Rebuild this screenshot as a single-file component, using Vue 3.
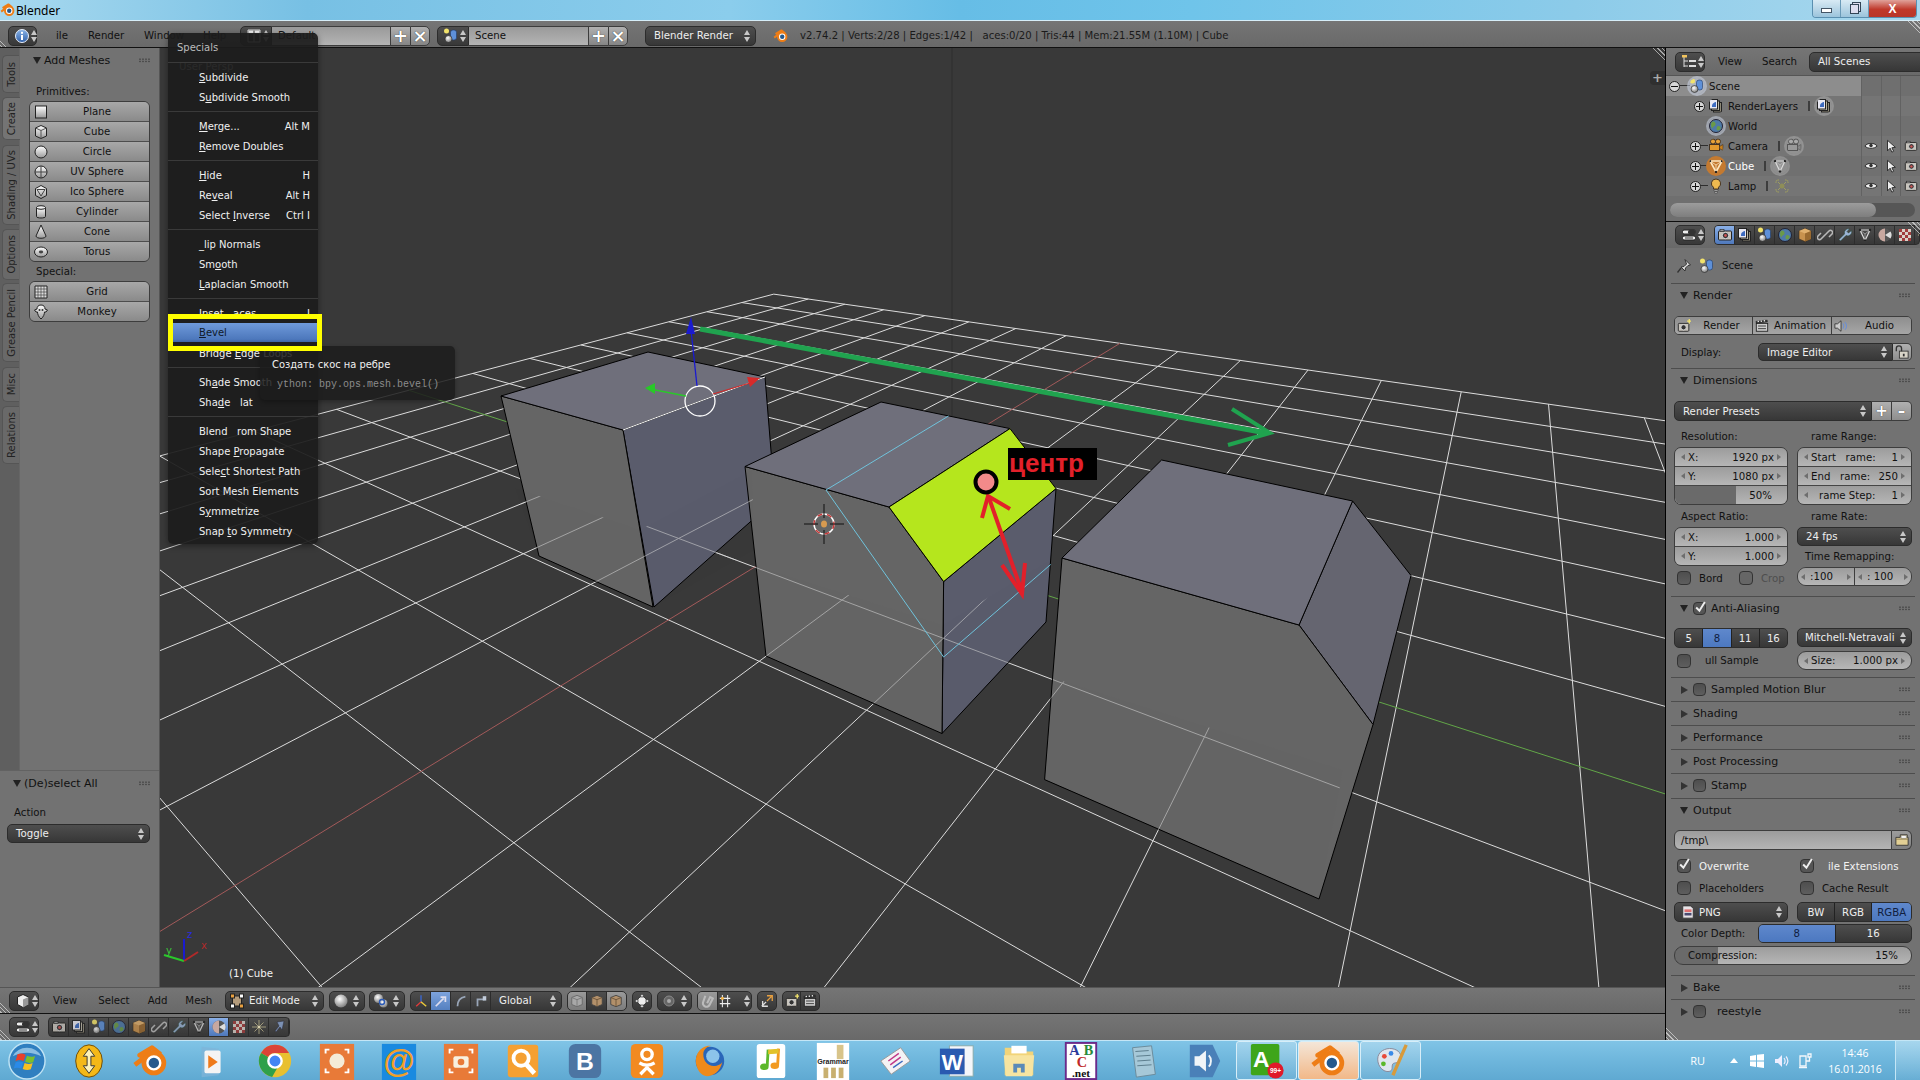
<script setup>
// 3D view grid comes from a homography picked off the reference
const O = [825, 524]
const VU = [1522, 97]
const VV = [-417, 125]
const A = 0.0917
const B = 0.063

function project(u, v) {
  const w = 1 + u * A + v * B
  return [
    (O[0] + u * A * VU[0] + v * B * VV[0]) / w,
    (O[1] + u * A * VU[1] + v * B * VV[1]) / w
  ]
}

function gridLine(u0, v0, u1, v1) {
  // keep the end that would cross behind the camera off the picture
  const minW = 0.14
  const w0 = 1 + u0 * A + v0 * B
  const w1 = 1 + u1 * A + v1 * B
  let a = [u0, v0]
  if (w0 < minW) {
    const t = (minW - w0) / (w1 - w0)
    a = [u0 + (u1 - u0) * t, v0 + (v1 - v0) * t]
  }
  const p = project(a[0], a[1])
  const q = project(u1, v1)
  return { x1: p[0], y1: p[1], x2: q[0], y2: q[1] }
}

const gridLines = []
for (let i = -8; i <= 8; i++) {
  if (i !== 0) {
    gridLines.push(gridLine(-8, i, 8, i))
    gridLines.push(gridLine(i, -8, i, 8))
  }
}
const redAxis = gridLine(-8, 0, 8, 0)
const greenAxis = gridLine(0, -8, 0, 8)

const poly = pts => pts.map(p => p.join(',')).join(' ')

const faces = [
  { fill: '#5a5c6c', pts: [[623, 430], [765, 377], [775, 500], [654, 607]] },
  { fill: '#656565', pts: [[501, 396], [623, 430], [653, 607], [539, 556]] },
  { fill: '#6f6f7b', pts: [[501, 396], [648, 352], [765, 377], [623, 430]] },
  { fill: '#5a5c6c', pts: [[943.6, 581.6], [1056, 488.6], [1046, 622], [942, 733.5]] },
  { fill: '#656565', pts: [[745, 466.5], [889, 507], [943.6, 581.6], [942, 733.5], [766, 656]] },
  { fill: '#6f6f7b', pts: [[745, 466.5], [881, 402], [1010, 428.6], [889, 507]] },
  { fill: '#b5e61d', pts: [[1010, 428.6], [1056, 488.6], [943.6, 581.6], [889, 507]] },
  { fill: '#656570', pts: [[1352.6, 501], [1411, 575.5], [1373, 724.5], [1299, 625]] },
  { fill: '#656565', pts: [[1062, 558], [1299, 625], [1373, 724.5], [1319, 899], [1044.6, 779.6]] },
  { fill: '#6f6f7b', pts: [[1062, 558], [1161.6, 460], [1352.6, 501], [1299, 625]] }
]

// parts of the cubes that lie under the floor, so the grid stays visible there
const underFloor = [
  [[515, 488], [640, 530], [752, 470], [754, 550], [653, 607], [539, 556]],
  [[753, 565], [943, 625], [1050, 560], [1046, 622], [942, 733], [766, 656]],
  [[1053, 678], [1343, 770], [1319, 899], [1044, 780]]
]

const tabs = [
  { name: 'Tools', cls: 'tab-tools' },
  { name: 'Create', cls: 'tab-create', active: true },
  { name: 'Shading / UVs', cls: 'tab-shading' },
  { name: 'Options', cls: 'tab-options' },
  { name: 'Grease Pencil', cls: 'tab-grease' },
  { name: 'Misc', cls: 'tab-misc' },
  { name: 'Relations', cls: 'tab-relations' }
]

const primitives = [
  ['Plane', 'plane'], ['Cube', 'cube'], ['Circle', 'circle'], ['UV Sphere', 'uvsphere'],
  ['Ico Sphere', 'ico'], ['Cylinder', 'cyl'], ['Cone', 'cone'], ['Torus', 'torus']
]
const special = [['Grid', 'grid'], ['Monkey', 'monkey']]

const menuGroups = [
  [['&Subdivide'], ['S&ubdivide Smooth']],
  [['&Merge...', 'Alt M'], ['&Remove Doubles']],
  [['&Hide', 'H'], ['Re&veal', 'Alt H'], ['Select &Inverse', 'Ctrl I']],
  [['_lip Normals'], ['Sm&ooth'], ['&Laplacian Smooth']],
  [['&Inset   aces', 'I'], ['&Bevel'], ['Bridge &Edge Loops']],
  [['Sh&ade Smooth'], ['Sha&de   lat']],
  [['Blend   rom Shape'], ['Shape &Propagate'], ['Sele&ct Shortest Path'], ['Sort Mesh Elements'], ['S&ymmetrize'], ['Snap &to Symmetry']]
]

function split(label) {
  const i = label.indexOf('&')
  if (i < 0) return [label, '', '']
  return [label.slice(0, i), label[i + 1], label.slice(i + 2)]
}

const outliner = [
  { name: 'Scene', icon: 'scene', exp: 'minus', cls: 'lvl0', hi: true },
  { name: 'RenderLayers', icon: 'layers', exp: 'plus', cls: 'lvl1', extra: 'layers' },
  { name: 'World', icon: 'world', cls: 'lvl2', ring: true },
  { name: 'Camera', icon: 'camera', exp: 'plus', cls: 'lvl3', extra: 'camgrey', vis: true },
  { name: 'Cube', icon: 'meshtri', exp: 'plus', cls: 'lvl3', extra: 'meshgrey', vis: true, sel: true },
  { name: 'Lamp', icon: 'lamp', exp: 'plus', cls: 'lvl3', extra: 'lampdata', plain: true, vis: true }
]

const propTabs = ['rcam', 'layers', 'scene', 'world', 'box', 'chain', 'wrench', 'meshgrey', 'matball', 'checker', 'stars']
const lowerTabs = ['rcam', 'layers', 'scene', 'world', 'box', 'chain', 'wrench', 'meshgrey', 'matball', 'checker', 'stars', 'physics']

const collapsedA = [
  { name: 'Sampled Motion Blur', chk: true },
  { name: 'Shading' },
  { name: 'Performance' },
  { name: 'Post Processing' },
  { name: 'Stamp', chk: true }
]

const sans = 'Liberation Sans, sans-serif'
const serif = 'Liberation Serif, serif'
const taskIcons = [
  { id: 't-arrows' }, { id: 't-blender' }, { id: 't-media' }, { id: 't-chrome' }, { id: 't-orange' },
  { id: 't-mail', labels: [{ t: '@', x: 20, y: 32, size: 34, fill: '#f2a02a', font: sans }] },
  { id: 't-cam' }, { id: 't-search' },
  { id: 't-vk', labels: [{ t: 'B', x: 20, y: 29, size: 26, fill: '#fff', font: sans }] },
  { id: 't-ok' }, { id: 't-fox' }, { id: 't-music' },
  { id: 't-gram', labels: [{ t: 'Grammar', x: 20, y: 23, size: 7.5, fill: '#222', font: sans }] },
  { id: 't-book' },
  { id: 't-word', labels: [{ t: 'W', x: 15, y: 29, size: 24, fill: '#fff', font: sans }] },
  { id: 't-folder' },
  { id: 't-abc', labels: [
    { t: 'A', x: 13, y: 14, size: 15, fill: '#2a3a9a', font: serif },
    { t: 'B', x: 28, y: 14, size: 15, fill: '#2a8a3a', font: serif },
    { t: 'C', x: 21, y: 26, size: 15, fill: '#c02a2a', font: serif },
    { t: '.net', x: 20, y: 37, size: 12, fill: '#111', font: serif }
  ] },
  { id: 't-note' }, { id: 't-speak' },
  { id: 't-a99', open: true, labels: [
    { t: 'A', x: 14, y: 26, size: 24, fill: '#fff', font: sans },
    { t: '99+', x: 29, y: 33, size: 7, fill: '#fff', font: sans }
  ] },
  { id: 't-blender', open: true, hot: true },
  { id: 't-paint', open: true }
]
</script>

<template>
  <div class="app">
    <svg class="defs" width="0" height="0">
      <defs>
        <linearGradient id="gw" x1="0" y1="0" x2="0" y2="1"><stop offset="0" stop-color="#fff"/><stop offset="1" stop-color="#9a9a9a"/></linearGradient>
        <linearGradient id="gb" x1="0" y1="0" x2="0" y2="1"><stop offset="0" stop-color="#8ab4e8"/><stop offset="1" stop-color="#2f5fa8"/></linearGradient>
        <radialGradient id="gs" cx=".4" cy=".35" r=".7"><stop offset="0" stop-color="#fff"/><stop offset="1" stop-color="#777"/></radialGradient>
      </defs>
      <symbol id="i-plane" viewBox="0 0 16 16"><rect x="2.5" y="2" width="11" height="12" fill="url(#gw)" stroke="#222"/></symbol>
      <symbol id="i-cube" viewBox="0 0 16 16"><path d="M8 1.5l5.5 2.5v8L8 14.5 2.5 12V4z" fill="url(#gw)" stroke="#222"/><path d="M2.5 4L8 6.5l5.5-2.5M8 6.5v8" fill="none" stroke="#555"/></symbol>
      <symbol id="i-circle" viewBox="0 0 16 16"><circle cx="8" cy="8" r="6" fill="url(#gw)" stroke="#222"/></symbol>
      <symbol id="i-uvsphere" viewBox="0 0 16 16"><circle cx="8" cy="8" r="6" fill="url(#gw)" stroke="#222"/><path d="M2 8h12M8 2v12" fill="none" stroke="#444"/></symbol>
      <symbol id="i-ico" viewBox="0 0 16 16"><path d="M8 1.5l5.5 3v7L8 14.5l-5.5-3v-7z" fill="url(#gw)" stroke="#222"/><path d="M4 5.5h8L8 12z" fill="none" stroke="#444"/></symbol>
      <symbol id="i-cyl" viewBox="0 0 16 16"><path d="M3.5 3.5v9c0 2 9 2 9 0v-9z" fill="url(#gw)" stroke="#222"/><ellipse cx="8" cy="3.5" rx="4.5" ry="1.8" fill="#eee" stroke="#222"/></symbol>
      <symbol id="i-cone" viewBox="0 0 16 16"><path d="M8 1L3 12c0 3 10 3 10 0z" fill="url(#gw)" stroke="#222"/></symbol>
      <symbol id="i-torus" viewBox="0 0 16 16"><ellipse cx="8" cy="8" rx="6.5" ry="5" fill="url(#gw)" stroke="#222"/><ellipse cx="8" cy="8" rx="2.2" ry="1.4" fill="#444"/></symbol>
      <symbol id="i-grid" viewBox="0 0 16 16"><path d="M2 2h12v12H2z" fill="#ddd" stroke="#222"/><path d="M5 2v12M8 2v12M11 2v12M2 5h12M2 8h12M2 11h12" stroke="#444" stroke-width=".7"/></symbol>
      <symbol id="i-monkey" viewBox="0 0 16 16"><path d="M8 1c3 0 4 2 4 4l2.500 1-1.500 2h-1.500c0 2-1 5-3.500 7-2.500-2-3.500-5-3.500-7H3L1.500 6 4 5c0-2 1-4 4-4z" fill="url(#gw)" stroke="#222"/><circle cx="6.500" cy="6" r="1" fill="#333"/><circle cx="9.500" cy="6" r="1" fill="#333"/></symbol>
      <symbol id="i-info" viewBox="0 0 16 16"><circle cx="8" cy="8" r="6.500" fill="url(#gb)" stroke="#e8eef8"/><rect x="7" y="7" width="2" height="5" fill="#fff"/><rect x="7" y="3.800" width="2" height="2" fill="#fff"/></symbol>
      <symbol id="i-layout" viewBox="0 0 16 16"><path d="M2 2h12v12H2z" fill="#333" stroke="#ddd"/><path d="M2.500 2.500h5v3h-5zM8.500 2.500h5v3h-5z" fill="#eee"/><path d="M8 6v8" stroke="#ddd"/></symbol>
      <symbol id="i-scene" viewBox="0 0 16 16"><circle cx="3.500" cy="3" r="2.500" fill="#f2e36b"/><rect x="7.500" y="2" width="6" height="10" rx="2.500" fill="#5e90d8" stroke="#1e3a68" stroke-width=".6"/><circle cx="5.500" cy="11" r="3.500" fill="url(#gs)" stroke="#222" stroke-width=".6"/></symbol>
      <symbol id="i-layers" viewBox="0 0 16 16"><rect x="5.500" y="4.500" width="8" height="9.500" fill="#8f8a78" stroke="#222"/><rect x="3.500" y="3" width="8" height="9.500" fill="#b9b5a4" stroke="#222"/><rect x="1.500" y="1.500" width="8" height="9.500" fill="#e8e8f2" stroke="#222"/><path d="M4 8c0-3 3-4 4-4v5H4z" fill="#3d6bc0"/></symbol>
      <symbol id="i-world" viewBox="0 0 16 16"><circle cx="8" cy="8" r="6.500" fill="#4e7aa8" stroke="#223"/><path d="M5 3.500c2 0 3 2 2.500 3.500S5 8 4.500 10 3 8 3 6.500 4 3.500 5 3.500zM10 8c2 0 3 1 2.500 2.500S10 13 9 12s0-4 1-4z" fill="#6a9a48"/></symbol>
      <symbol id="i-camera" viewBox="0 0 16 16"><circle cx="5" cy="3.500" r="2.500" fill="#e8a238" stroke="#432"/><circle cx="10" cy="3.500" r="2.500" fill="#e8a238" stroke="#432"/><rect x="1.500" y="6.500" width="10" height="6" fill="#e39a2e" stroke="#432"/><path d="M11.500 8.500l3.500-2v6l-3.500-2z" fill="#c77f1d" stroke="#432" stroke-width=".6"/></symbol>
      <symbol id="i-camgrey" viewBox="0 0 16 16"><circle cx="5" cy="3.500" r="2.500" fill="#aaa" stroke="#555"/><circle cx="10" cy="3.500" r="2.500" fill="#aaa" stroke="#555"/><rect x="1.500" y="6.500" width="10" height="6" fill="#999" stroke="#555"/><path d="M11.500 8.500l3.500-2v6l-3.500-2z" fill="#888" stroke="#555" stroke-width=".6"/></symbol>
      <symbol id="i-meshtri" viewBox="0 0 16 16"><path d="M2 3h12L8 14z" fill="none" stroke="#fbe6c0" stroke-width="1.600"/><path d="M2 3L8 7l6-4M8 7v7" fill="none" stroke="#fbe6c0" stroke-width=".8"/><circle cx="2" cy="3" r="1.200" fill="#222"/><circle cx="14" cy="3" r="1.200" fill="#222"/><circle cx="8" cy="14" r="1.200" fill="#222"/></symbol>
      <symbol id="i-meshgrey" viewBox="0 0 16 16"><path d="M3 3h10L8 13.500z" fill="none" stroke="#d8d8d8" stroke-width="1.200"/><path d="M3 3l5 4 5-4M8 7v6.500" fill="none" stroke="#ccc" stroke-width=".6"/><circle cx="3" cy="3" r="1.200" fill="#222"/><circle cx="13" cy="3" r="1.200" fill="#222"/><circle cx="8" cy="13.500" r="1.200" fill="#222"/></symbol>
      <symbol id="i-lamp" viewBox="0 0 16 16"><path d="M8 1a4.500 4.500 0 0 0-2.500 8.300V11h5V9.300A4.500 4.500 0 0 0 8 1z" fill="#eeb94f" stroke="#432"/><path d="M6 12h4v1H6zM6.500 14h3v1h-3z" fill="#eee" stroke="#333" stroke-width=".5"/></symbol>
      <symbol id="i-lampdata" viewBox="0 0 16 16"><circle cx="8" cy="8" r="2.500" fill="#8e8e58"/><path d="M2 2h3M2 2v3M14 2h-3M14 2v3M2 14h3M2 14v-3M14 14h-3M14 14v-3M4 4l2 2M12 4l-2 2M4 12l2-2M12 12l-2-2" stroke="#9e9e60" fill="none"/></symbol>
      <symbol id="i-eye" viewBox="0 0 16 16"><path d="M1 8c3-4 11-4 14 0-3 3.500-11 3.500-14 0z" fill="#f2f2f2" stroke="#222"/><circle cx="8" cy="7.500" r="2" fill="#333"/></symbol>
      <symbol id="i-cursor" viewBox="0 0 16 16"><path d="M4 1.500v12l3-3 2 4.500 2-1-2-4 4-.5z" fill="#eee" stroke="#222"/></symbol>
      <symbol id="i-rcam" viewBox="0 0 16 16"><rect x="1.500" y="4" width="13" height="9" rx="1" fill="#c8c4bc" stroke="#222"/><rect x="3" y="2.500" width="4" height="2" fill="#999" stroke="#222" stroke-width=".6"/><circle cx="8.500" cy="8.500" r="3.200" fill="#333" stroke="#ddd"/><circle cx="8.500" cy="8.500" r="1.400" fill="#c55"/></symbol>
      <symbol id="i-box" viewBox="0 0 16 16"><path d="M8 1.500l6 2.500v8L8 14.500 2 12V4z" fill="#c8924e" stroke="#3a2a16" stroke-width=".6"/><path d="M2 4l6 2.500L14 4 8 1.500z" fill="#e0b06e"/><path d="M8 6.500v8L14 12V4z" fill="#9a6a30"/></symbol>
      <symbol id="i-chain" viewBox="0 0 16 16"><path d="M7 9l-3 3a2 2 0 0 1-3-3l3-3M9 7l3-3a2 2 0 0 1 3 3l-3 3M5.500 10.500l5-5" fill="none" stroke="#b8b8b8" stroke-width="1.600"/></symbol>
      <symbol id="i-wrench" viewBox="0 0 16 16"><path d="M14.500 3.500l-3 2.500-1.500-1.500L12.500 2a4 4 0 0 0-5 5L2 12.500 3.500 14 9 8.500a4 4 0 0 0 5.500-5z" fill="#9ab2d4" stroke="#243" stroke-width=".5"/></symbol>
      <symbol id="i-matball" viewBox="0 0 16 16"><circle cx="8" cy="8" r="6.500" fill="#555"/><path d="M8 1.500a6.500 6.500 0 0 0 0 13z" fill="#c8a8a0"/><path d="M8 8l5.500-3.500a6.500 6.500 0 0 1 0 7z" fill="#ddd"/></symbol>
      <symbol id="i-checker" viewBox="0 0 16 16"><rect x="2" y="2" width="12" height="12" fill="#d8d0c8"/><path d="M2 2h3v3H2zM8 2h3v3H8zM5 5h3v3H5zM11 5h3v3h-3zM2 8h3v3H2zM8 8h3v3H8zM5 11h3v3H5zM11 11h3v3h-3z" fill="#a03c3c"/></symbol>
      <symbol id="i-stars" viewBox="0 0 16 16"><path d="M8 1v14M1 8h14M3.500 3.500l9 9M12.500 3.500l-9 9" stroke="#e8dca8" stroke-width=".7"/><circle cx="8" cy="8" r="1.300" fill="#fff6c8"/></symbol>
      <symbol id="i-physics" viewBox="0 0 16 16"><path d="M6 3l7-1-2 9-2-3-4 5-1-1 4-5z" fill="#8aa4d0" stroke="#223" stroke-width=".5"/></symbol>
      <symbol id="i-props" viewBox="0 0 16 16"><rect x="1.500" y="3" width="13" height="4" rx="1.500" fill="#eee" stroke="#222"/><rect x="1.500" y="9" width="13" height="4" rx="1.500" fill="#eee" stroke="#222"/><rect x="7" y="3" width="7.500" height="4" rx="1.500" fill="#333"/><path d="M4 11h8" stroke="#333"/></symbol>
      <symbol id="i-outl" viewBox="0 0 16 16"><path d="M3 2v11M3 7h4M3 12h4" stroke="#ddd" fill="none"/><rect x="1" y="1" width="5" height="2.500" fill="#f2c45c"/><path d="M8 6h7v2H8zM8 11h7v2H8z" fill="#ddd"/></symbol>
      <symbol id="i-pin" viewBox="0 0 16 16"><path d="M9 1.500l5.500 5.500-2.500.5-2.500 2.500-.5 3-4-4 3-.5L10.500 6z" fill="#ddd" stroke="#333"/><path d="M5 10l-3.500 4.500" stroke="#333" stroke-width="1.300"/></symbol>
      <symbol id="i-anim" viewBox="0 0 16 16"><rect x="1.500" y="5" width="13" height="9" fill="#ccc" stroke="#222"/><path d="M1 2.500l13-1.500.3 2.500-13 1.500z" fill="#333" stroke="#111" stroke-width=".3"/><path d="M3 3l1.500-.2M6.500 2.600l1.500-.2M10 2.200l1.500-.2" stroke="#eee" stroke-width="1.500"/><path d="M3.500 8h9M3.500 11h9" stroke="#333"/></symbol>
      <symbol id="i-audio" viewBox="0 0 16 16"><path d="M1 5.500h3L8 2v12l-4-3.500H1z" fill="#ccc" stroke="#333"/><path d="M10 5c1.500 1.500 1.500 4.500 0 6M12.500 3.500c2.500 2.500 2.500 6.500 0 9" fill="none" stroke="#6e8fd0" stroke-width="1.200"/></symbol>
      <symbol id="i-lock" viewBox="0 0 16 16"><rect x="5" y="7" width="10" height="8" fill="#d8d4c8" stroke="#333"/><path d="M1.500 7V4a3 3 0 0 1 6 0v3" fill="none" stroke="#333" stroke-width="1.500"/><rect x="9" y="10" width="2" height="3" fill="#333"/></symbol>
      <symbol id="i-folder" viewBox="0 0 16 16"><path d="M1 5h5V2h8v3h1v9H1z" fill="#e2cf94" stroke="#333"/><path d="M7 3h6v3H7z" fill="#fff" stroke="#555" stroke-width=".5"/><path d="M1 7h14" stroke="#8a7a50"/></symbol>
      <symbol id="i-png" viewBox="0 0 16 16"><path d="M2 1h9l3 3v11H2z" fill="#e8e4e8" stroke="#333"/><rect x="4" y="5" width="8" height="3" fill="#e07070"/><rect x="4" y="9" width="8" height="3" fill="#4a4a70"/></symbol>
      <symbol id="i-solid" viewBox="0 0 16 16"><path d="M8 1.500l5.500 2.500v7.500L8 14.500l-5.500-3V4z" fill="#eee" stroke="#222"/><path d="M8 6.500v8l5.500-3V4z" fill="#999"/></symbol>
      <symbol id="i-edit" viewBox="0 0 16 16"><path d="M3.500 3h9v10h-9z" fill="#b49c7c" stroke="#222"/><rect x="1.500" y="1" width="4" height="4" fill="#e8a040" stroke="#222"/><rect x="10.500" y="1" width="4" height="4" fill="#fff" stroke="#222"/><rect x="1.500" y="11" width="4" height="4" fill="#fff" stroke="#222"/><rect x="10.500" y="11" width="4" height="4" fill="#e8a040" stroke="#222"/></symbol>
      <symbol id="i-sphere" viewBox="0 0 16 16"><circle cx="8" cy="8" r="6.500" fill="url(#gs)"/></symbol>
      <symbol id="i-pivot" viewBox="0 0 16 16"><circle cx="5.500" cy="5.500" r="4.500" fill="url(#gs)"/><circle cx="10.500" cy="10.500" r="4" fill="url(#gs)"/><circle cx="9" cy="9" r="2.500" fill="none" stroke="#2a5ab8" stroke-width="1.400"/></symbol>
      <symbol id="i-axes" viewBox="0 0 16 16"><path d="M8 9V1.500" stroke="#3a6ad8" stroke-width="1.500"/><path d="M8 9l-5.500 5" stroke="#e83a3a" stroke-width="1.500"/><path d="M8 9l6 5" stroke="#e8c83a" stroke-width="1.500"/></symbol>
      <symbol id="i-tarrow" viewBox="0 0 16 16"><path d="M2 14l9-9M7.500 3.500H13V9" fill="none" stroke="#dde" stroke-width="2"/></symbol>
      <symbol id="i-rot" viewBox="0 0 16 16"><path d="M4 14C4 8 7 4 13 3" fill="none" stroke="#99a6b8" stroke-width="2"/></symbol>
      <symbol id="i-scale" viewBox="0 0 16 16"><path d="M4 14V6h8" fill="none" stroke="#99a6b8" stroke-width="2"/><rect x="10" y="2.500" width="4" height="5" fill="#c2ccda"/></symbol>
      <symbol id="i-v1" viewBox="0 0 16 16"><path d="M8 1.500l6 2.500v8L8 14.500 2 12V4z" fill="#a8a8a8" stroke="#666"/><path d="M2 4l6 2.500L14 4M8 6.500v8" fill="none" stroke="#777"/></symbol>
      <symbol id="i-v2" viewBox="0 0 16 16"><path d="M8 1.500l6 2.500v8L8 14.500 2 12V4z" fill="#b2906a" stroke="#444"/><path d="M2 4l6 2.500L14 4M8 6.500v8" fill="none" stroke="#6a5238"/></symbol>
      <symbol id="i-orbit" viewBox="0 0 16 16"><circle cx="8" cy="8" r="5" fill="#eee" stroke="#333"/><g fill="#eee" stroke="#222" stroke-width=".5"><circle cx="8" cy="2" r="1.500"/><circle cx="8" cy="14" r="1.500"/><circle cx="2" cy="8" r="1.500"/><circle cx="14" cy="8" r="1.500"/></g></symbol>
      <symbol id="i-prop" viewBox="0 0 16 16"><circle cx="8" cy="8" r="5" fill="#666" stroke="#8a8a8a"/><circle cx="8" cy="8" r="2" fill="#aaa"/></symbol>
      <symbol id="i-magnet" viewBox="0 0 16 16"><path d="M5 2L2.500 9a4 4 0 0 0 7.500 3l3.500-7-3-1.500-3.500 7" fill="none" stroke="#bbb" stroke-width="2.400"/></symbol>
      <symbol id="i-snap" viewBox="0 0 16 16"><path d="M2 5h12M2 11h12M5 1v14M11 1v14" stroke="#eee" stroke-width="1.200"/><rect x="3.500" y="3.500" width="3" height="3" fill="#f0b040"/></symbol>
      <symbol id="i-rimg" viewBox="0 0 16 16"><path d="M2 14l5-5M3 8v6h6" fill="none" stroke="#ddd" stroke-width="1.500"/><path d="M8 8l5-5M14 8V2H8" fill="none" stroke="#e8a040" stroke-width="1.500"/></symbol>
      <symbol id="i-rnew" viewBox="0 0 16 16"><rect x="1.500" y="5" width="12" height="9" rx="1" fill="#c8c4bc" stroke="#222"/><circle cx="7.500" cy="9.500" r="3" fill="#333" stroke="#ddd"/><path d="M14 0v5M11.500 2.500h5" stroke="#f2e36b" stroke-width="1.500"/></symbol>

      <!-- taskbar -->
      <symbol id="t-start" viewBox="0 0 40 40"><circle cx="20" cy="20" r="19" fill="#2f7fc0" stroke="#bfe3f4" stroke-width="1.500"/><path d="M5 15A17 17 0 0 1 35 15C25 10 15 10 5 15z" fill="#c8e8f8" opacity=".6"/><path d="M10 13c3-1.500 6-1 8.500.5l-2 6.500c-3-1-5.500-1.500-8.500 0z" fill="#e8402a"/><path d="M20 14.500c3 1.500 5.500 1.500 8.500.2l-2 6.500c-3 1.200-5.500 1-8.500-.4z" fill="#7cc02a"/><path d="M8 21.500c3-1.500 5.500-1 8 0l-2 6.500c-3-1-5.500-1.500-8 0z" fill="#2a8ae8"/><path d="M17.500 22c3 1.500 5.500 1.500 8.500.2l-2 6.500c-3 1.200-5.500 1-8.500-.4z" fill="#f8c020"/></symbol>
      <symbol id="t-arrows" viewBox="0 0 40 40"><ellipse cx="20" cy="20" rx="14" ry="17" fill="#f4b818" stroke="#6a4a08"/><path d="M20 7l6 8h-4v10h4l-6 8-6-8h4V15h-4z" fill="#fdf2b8" stroke="#333"/></symbol>
      <symbol id="t-blender" viewBox="0 0 40 40"><path d="M3 24l13-10H8l13-8 9 7" fill="none" stroke="#ee7d16" stroke-width="5" stroke-linejoin="round"/><circle cx="23" cy="22" r="10.500" fill="#fff" stroke="#ee7d16" stroke-width="5"/><circle cx="23" cy="22" r="5.500" fill="#25598d"/></symbol>
      <symbol id="t-media" viewBox="0 0 40 40"><path d="M8 5l18 2v28L8 37z" fill="#7fb4d8" opacity=".75"/><rect x="11" y="9" width="17" height="24" rx="2" fill="#f4f4f4"/><path d="M15 14l10 7-10 7z" fill="#ef7a1a"/></symbol>
      <symbol id="t-chrome" viewBox="0 0 40 40"><circle cx="20" cy="20" r="17" fill="#e8c030"/><path d="M20 3a17 17 0 0 1 14.700 8.500H20A8.500 8.500 0 0 0 12.700 15.700L5.300 11.500A17 17 0 0 1 20 3z" fill="#db4437"/><path d="M5.300 11.500A17 17 0 0 0 17 36.800l7-12.300A8.500 8.500 0 0 1 12.700 15.700z" fill="#2fa04a"/><circle cx="20" cy="20" r="7" fill="#4285f4" stroke="#fff" stroke-width="2.500"/></symbol>
      <symbol id="t-orange" viewBox="0 0 40 40"><rect x="2" y="2" width="36" height="38" fill="#e87a38"/><circle cx="20" cy="20" r="8" fill="#f4ecd8"/><path d="M8 12V8h4M32 12V8h-4M8 28v4h4M32 28v4h-4" fill="none" stroke="#fff" stroke-width="2"/></symbol>
      <symbol id="t-mail" viewBox="0 0 40 40"><rect x="2" y="2" width="36" height="38" fill="#1a8ae0"/></symbol>
      <symbol id="t-cam" viewBox="0 0 40 40"><rect x="2" y="2" width="36" height="38" fill="#e87a38"/><rect x="12" y="15" width="16" height="12" rx="2" fill="#f8f0e0"/><circle cx="20" cy="21" r="3.500" fill="#e87a38"/><path d="M8 12V8h4M32 12V8h-4M8 28v4h4M32 28v4h-4" fill="none" stroke="#fff" stroke-width="2"/></symbol>
      <symbol id="t-search" viewBox="0 0 40 40"><rect x="4" y="3" width="32" height="34" rx="3" fill="#f5a032"/><circle cx="18" cy="17" r="8" fill="none" stroke="#fff" stroke-width="4"/><path d="M23 23l9 10" stroke="#fff" stroke-width="5"/></symbol>
      <symbol id="t-vk" viewBox="0 0 40 40"><rect x="3" y="2" width="34" height="36" rx="7" fill="#4c75a3"/></symbol>
      <symbol id="t-ok" viewBox="0 0 40 40"><rect x="3" y="2" width="34" height="36" rx="5" fill="#f28a20"/><circle cx="20" cy="13" r="5.500" fill="none" stroke="#fff" stroke-width="3.500"/><path d="M12 22c5 3 11 3 16 0M20 25v3M13 34l7-7 7 7" fill="none" stroke="#fff" stroke-width="3.500"/></symbol>
      <symbol id="t-fox" viewBox="0 0 40 40"><circle cx="21" cy="20" r="15" fill="#2a66b8"/><circle cx="24" cy="15" r="7" fill="#8cc4ea"/><path d="M8 28c-6-14 4-25 14-24-4 1-8 4-8 9 0 8 6 14 14 12 3-1 5-2 6-4-2 10-10 15-16 15-4 0-8-3-10-8z" fill="#ef8a1a"/></symbol>
      <symbol id="t-music" viewBox="0 0 40 40"><rect x="5" y="2" width="30" height="36" rx="3" fill="#fff"/><path d="M17 8l-1 17" stroke="#5cb82a" stroke-width="3"/><ellipse cx="13" cy="26" rx="4.500" ry="3.500" fill="#5cb82a"/><path d="M28 7l-1 17" stroke="#f29a20" stroke-width="3"/><ellipse cx="24" cy="25" rx="4.500" ry="3.500" fill="#f29a20"/><path d="M17 8l11-1v5l-11 1z" fill="#e2c22a"/></symbol>
      <symbol id="t-gram" viewBox="0 0 40 40"><rect x="3" y="1" width="34" height="40" fill="#fff"/><rect x="24" y="3" width="7" height="15" fill="#d8c48a"/><rect x="10" y="27" width="5" height="11" fill="#c8b070"/><rect x="18" y="27" width="5" height="11" fill="#c8b070"/><rect x="26" y="27" width="5" height="11" fill="#c8b070"/></symbol>
      <symbol id="t-book" viewBox="0 0 40 40"><path d="M5 20L26 6l10 14-20 14z" fill="#f4f2f4" stroke="#999"/><path d="M13 20l11-8M15 24l11-8" stroke="#c03a8a" stroke-width="1.600"/><path d="M18 27l10-7" stroke="#3a6ac0" stroke-width="1.600"/></symbol>
      <symbol id="t-word" viewBox="0 0 40 40"><rect x="12" y="4" width="25" height="32" fill="#f4f6fa" stroke="#8aa"/><rect x="2" y="7" width="26" height="27" fill="#2a5ab0"/></symbol>
      <symbol id="t-folder" viewBox="0 0 40 40"><path d="M5 6h12l3 4h15v25H5z" fill="#f2d479"/><rect x="12" y="4" width="16" height="8" fill="#fff"/><path d="M4 14h32l-2 22H6z" fill="#f7e4a0"/><path d="M14 32V23h12v9h-4v-5h-4v5z" fill="#5a8ab8"/></symbol>
      <symbol id="t-abc" viewBox="0 0 40 40"><rect x="4" y="1" width="32" height="38" fill="#fff" stroke="#6a2a8a" stroke-width="2"/></symbol>
      <symbol id="t-note" viewBox="0 0 40 40"><path d="M9 6l20-2 4 30-20 3z" fill="#a6c8d8" stroke="#6a8a9a"/><path d="M12 10l14-1M13 15l15-1M14 20l14-1M14 25l15-1" stroke="#5a7a8a"/></symbol>
      <symbol id="t-speak" viewBox="0 0 40 40"><path d="M4 3h24l8 17-8 17H4z" fill="#4a80b8"/><path d="M9 15h5l7-6v22l-7-6H9z" fill="#f0f4f8"/><path d="M24 14c3 3 3 9 0 12" fill="none" stroke="#f0f4f8" stroke-width="2"/></symbol>
      <symbol id="t-a99" viewBox="0 0 40 40"><rect x="3" y="2" width="30" height="33" rx="2" fill="#3ea51a"/><circle cx="29" cy="30" r="8.500" fill="#e01a2a"/></symbol>
      <symbol id="t-paint" viewBox="0 0 40 40"><path d="M6 18c0-8 8-12 15-11 7 1 11 6 9 12-1 4-6 2-8 4-2 3 1 7-4 8-6 1-12-5-12-13z" fill="#dfe6ee" stroke="#889"/><circle cx="13" cy="15" r="2.500" fill="#e84a3a"/><circle cx="20" cy="12" r="2.500" fill="#3a8ae8"/><circle cx="12" cy="23" r="2.500" fill="#5ab82a"/><path d="M36 3L22 35" stroke="#d89a3a" stroke-width="3.500"/></symbol>
    </svg>

    <header class="titlebar">
      <svg class="title-logo"><use href="#t-blender" width="16" height="16"/></svg>
      <span class="title-text">Blender</span>
      <div class="winbtns">
        <span class="wb"><i class="wb-min"></i></span>
        <span class="wb"><i class="wb-max"></i></span>
        <span class="wb close">X</span>
      </div>
    </header>

    <div class="topbar">
      <div class="corner corner-tl"></div>
      <div class="pill pill-top"><svg class="ic"><use href="#i-info"/></svg><i class="updown"></i></div>
      <nav class="menubar">
        <span class="m-ile">ile</span><span class="m-render">Render</span><span class="m-win">Window</span><span class="m-help">Help</span>
      </nav>
      <div class="pill pill-top pill-layout"><svg class="ic"><use href="#i-layout"/></svg><i class="updown"></i></div>
      <div class="namefield nf-layout"><span class="nf-text">Default</span></div>
      <div class="nf-btn">+</div>
      <div class="nf-btn end">×</div>
      <div class="pill pill-top pill-scene"><svg class="ic"><use href="#i-scene"/></svg><i class="updown"></i></div>
      <div class="namefield nf-scene"><span class="nf-text">Scene</span></div>
      <div class="nf-btn">+</div>
      <div class="nf-btn end">×</div>
      <div class="dd dd-engine"><span>Blender Render</span><i class="updown"></i></div>
      <svg class="ic ic-logo"><use href="#t-blender" width="16" height="16"/></svg>
      <span class="stats">{{ 'v2.74.2 | Verts:2/28 | Edges:1/42 |   aces:0/20 | Tris:44 | Mem:21.55M (1.10M) | Cube' }}</span>
      <div class="corner corner-tr"></div>
    </div>

    <div class="workspace">
      <div class="left">
        <div class="main3d">
          <aside class="shelf">
            <div class="shelf-top">
              <div class="tabs">
                <div v-for="t in tabs" :key="t.name" class="tab" :class="[t.cls, { on: t.active }]"><span>{{ t.name }}</span></div>
              </div>
              <div class="shelf-panel">
                <div class="shelf-head"><i class="tri-down"></i><span>Add Meshes</span><i class="grip"></i></div>
                <div class="shelf-lbl lbl-prim">Primitives:</div>
                <div class="stack">
                  <div v-for="b in primitives" :key="b[0]" class="sbtn"><svg class="ic"><use :href="'#i-' + b[1]"/></svg><span>{{ b[0] }}</span></div>
                </div>
                <div class="shelf-lbl lbl-spec">Special:</div>
                <div class="stack">
                  <div v-for="b in special" :key="b[0]" class="sbtn"><svg class="ic"><use :href="'#i-' + b[1]"/></svg><span>{{ b[0] }}</span></div>
                </div>
              </div>
            </div>
            <div class="op-panel">
              <div class="shelf-head"><i class="tri-down"></i><span>(De)select All</span><i class="grip"></i></div>
              <div class="op-lbl">Action</div>
              <div class="dd dd-toggle"><span>Toggle</span><i class="updown"></i></div>
            </div>
          </aside>

          <div class="canvas">
            <svg class="scene" width="1505" height="939" viewBox="160 48 1505 939">
              <defs>
                <clipPath id="floor"><polygon v-for="(p, i) in underFloor" :key="i" :points="poly(p)"/></clipPath>
              </defs>
              <line x1="952" y1="48" x2="952" y2="430" stroke="#2f2f2f"/>
              <g stroke="#dcdcdc" stroke-width="1" fill="none">
                <line v-for="(l, i) in gridLines" :key="i" v-bind="l"/>
              </g>
              <line v-bind="redAxis" stroke="#a35a5a"/>
              <line v-bind="greenAxis" stroke="#62a648"/>

              <polygon v-for="(f, i) in faces" :key="'f' + i" :points="poly(f.pts)" :fill="f.fill" stroke="#000" stroke-width="1"/>
              <g clip-path="url(#floor)" stroke="#d8d8d8" stroke-width="1" opacity=".55">
                <line v-for="(l, i) in gridLines" :key="'o' + i" v-bind="l"/>
              </g>
              <line x1="623" y1="430" x2="765" y2="377" stroke="#fff"/>
              <polyline points="948.5,416 826,490 943.6,657 1050.7,564.5" fill="none" stroke="#6fc3dc"/>

              <!-- cursor -->
              <circle cx="824" cy="524" r="10" fill="none" stroke="#fff" stroke-width="1.500"/>
              <circle cx="824" cy="524" r="10" fill="none" stroke="#c63a3a" stroke-width="1.500" stroke-dasharray="5 5"/>
              <path d="M804 524h14M830 524h14M824 504v14M824 530v14" stroke="#111"/>
              <ellipse cx="824" cy="524" rx="3" ry="3.500" fill="#d89a50"/>

              <!-- manipulator -->
              <circle cx="700" cy="401" r="15" fill="none" stroke="#fff" stroke-width="1.300"/>
              <path d="M697 386L691 330" stroke="#1a1ad0" stroke-width="1.300"/>
              <path d="M691 317l-5 17h9z" fill="#1a1ad0"/>
              <path d="M686 396l-36-7" stroke="#2ac82a" stroke-width="1.300"/>
              <path d="M645 388l10-5v11z" fill="#28c828"/>
              <path d="M713 394l37-11" stroke="#d02a2a" stroke-width="1.300"/>
              <path d="M760 378l-13-1 3 10z" fill="#d82a2a"/>

              <!-- hand-drawn notes -->
              <line x1="700" y1="329" x2="1266" y2="433" stroke="#20a34f" stroke-width="5"/>
              <path d="M1232 409l38 24-42 12" fill="none" stroke="#20a34f" stroke-width="4"/>
              <line x1="989" y1="498" x2="1022" y2="592" stroke="#e2202a" stroke-width="4"/>
              <path d="M982 518l6-22 22 13M1002 565l20 29 3-31" fill="none" stroke="#e2202a" stroke-width="4"/>
              <circle cx="986" cy="482" r="10.500" fill="#f28a8a" stroke="#000" stroke-width="4"/>
              <rect x="1008" y="448" width="89" height="32" fill="#000"/>
              <text class="note" x="1009" y="472">центр</text>

              <!-- axis widget -->
              <path d="M184 961V939" stroke="#1a1ad0" stroke-width="2"/>
              <path d="M184 961l-20-6" stroke="#2ac82a" stroke-width="2"/>
              <path d="M184 961l14-9" stroke="#b02a2a" stroke-width="2"/>
              <text class="axl" x="187" y="938" fill="#2a2ae0">z</text>
              <text class="axl" x="166" y="954" fill="#3ac83a">y</text>
              <text class="axl" x="201" y="949" fill="#b02a2a">x</text>
              <text class="objname" x="229" y="977">(1) Cube</text>
              <text class="persp" x="179" y="70">User Persp</text>
            </svg>
            <div class="corner corner-view"></div>
            <div class="plus-tab">+</div>
          </div>
        </div>

        <div class="viewhead">
          <div class="corner corner-bl"></div>
          <div class="pill p-mode"><svg class="ic"><use href="#i-solid"/></svg><i class="updown"></i></div>
          <nav class="vh-menu"><span>View</span><span>Select</span><span>Add</span><span>Mesh</span></nav>
          <div class="dd dd-mode"><svg class="ic"><use href="#i-edit"/></svg><span>Edit Mode</span><i class="updown"></i></div>
          <div class="dd dd-shade"><svg class="ic"><use href="#i-sphere"/></svg><i class="updown"></i></div>
          <div class="dd dd-pivot"><svg class="ic"><use href="#i-pivot"/></svg><i class="updown"></i></div>
          <div class="tool-group">
            <span class="tg"><svg class="ic"><use href="#i-axes"/></svg></span>
            <span class="tg act"><svg class="ic"><use href="#i-tarrow"/></svg></span>
            <span class="tg"><svg class="ic"><use href="#i-rot"/></svg></span>
            <span class="tg"><svg class="ic"><use href="#i-scale"/></svg></span>
            <span class="tg-global">Global<i class="updown"></i></span>
          </div>
          <div class="tool-group light tg-sel">
            <span class="tg"><svg class="ic"><use href="#i-v1"/></svg></span>
            <span class="tg act2"><svg class="ic"><use href="#i-v2"/></svg></span>
            <span class="tg"><svg class="ic"><use href="#i-v2"/></svg></span>
          </div>
          <div class="tool-group tg-orb"><span class="tg"><svg class="ic"><use href="#i-orbit"/></svg></span></div>
          <div class="dd dd-prop"><svg class="ic"><use href="#i-prop"/></svg><i class="updown"></i></div>
          <div class="tool-group tg-snap">
            <span class="tg"><svg class="ic"><use href="#i-magnet"/></svg></span>
            <span class="tg"><svg class="ic"><use href="#i-snap"/></svg><i class="updown"></i></span>
          </div>
          <div class="tool-group tg-rimg"><span class="tg"><svg class="ic"><use href="#i-rimg"/></svg></span></div>
          <div class="tool-group tg-rnd">
            <span class="tg"><svg class="ic"><use href="#i-rnew"/></svg></span>
            <span class="tg"><svg class="ic"><use href="#i-anim"/></svg></span>
          </div>
        </div>

        <div class="lowerhead">
          <div class="corner corner-bl"></div>
          <div class="pill p-mode"><svg class="ic"><use href="#i-props"/></svg><i class="updown"></i></div>
          <div class="ptabs ptabs-low">
            <span v-for="t in lowerTabs" :key="t" class="ptab" :class="{ blue: t === 'matball' }"><svg class="ic"><use :href="'#i-' + t"/></svg></span>
          </div>
        </div>
      </div>

      <aside class="side">
        <div class="outl-head">
          <div class="pill p-outl"><svg class="ic"><use href="#i-outl"/></svg><i class="updown"></i></div>
          <span class="oh-view">View</span><span class="oh-search">Search</span>
          <div class="dd dd-all"><span>All Scenes</span></div>
        </div>
        <div class="tree">
          <div class="tree-line"></div>
          <div v-for="(r, i) in outliner" :key="r.name" class="orow" :class="[r.cls, { even: i % 2, hi: r.hi }]">
            <i v-if="r.exp" class="exp" :class="r.exp"></i>
            <svg class="ic oic" :class="{ sel: r.sel, ring: r.ring || r.hi }"><use :href="'#i-' + r.icon"/></svg>
            <span class="oname" :class="{ white: r.sel }">{{ r.name }}</span>
            <template v-if="r.extra">
              <i class="obar"></i>
              <svg class="ic oex" :class="{ plain: r.plain }"><use :href="'#i-' + r.extra"/></svg>
            </template>
            <div class="orest">
              <span class="ocell"><svg v-if="r.vis" class="ic ic14"><use href="#i-eye"/></svg></span>
              <span class="ocell"><svg v-if="r.vis" class="ic ic14"><use href="#i-cursor"/></svg></span>
              <span class="ocell"><svg v-if="r.vis" class="ic ic14"><use href="#i-rcam"/></svg></span>
            </div>
          </div>
          <div class="hscroll"><div class="hthumb"></div></div>
        </div>

        <div class="props-head">
          <div class="pill p-outl"><svg class="ic"><use href="#i-props"/></svg><i class="updown"></i></div>
          <div class="ptabs">
            <span v-for="t in propTabs" :key="t" class="ptab" :class="{ blue: t === 'rcam' }"><svg class="ic"><use :href="'#i-' + t"/></svg></span>
          </div>
          <div class="corner corner-ph"></div>
        </div>

        <div class="props">
          <div class="ctx"><svg class="ic"><use href="#i-pin"/></svg><svg class="ic ctx-sc"><use href="#i-scene"/></svg><span>Scene</span></div>

          <div class="ph first"><i class="tri-down"></i><span>Render</span><i class="grip"></i></div>
          <div class="bgroup row-render">
            <span class="bb b-r"><svg class="ic"><use href="#i-rnew"/></svg><em>Render</em></span>
            <span class="bb b-a"><svg class="ic"><use href="#i-anim"/></svg><em>Animation</em></span>
            <span class="bb b-s"><svg class="ic"><use href="#i-audio"/></svg><em>Audio</em></span>
          </div>
          <div class="row-display">
            <span class="rl">Display:</span>
            <div class="dd dd-display"><span>Image Editor</span><i class="updown"></i></div>
            <span class="lockbtn"><svg class="ic ic14"><use href="#i-lock"/></svg></span>
          </div>

          <div class="ph gap7"><i class="tri-down"></i><span>Dimensions</span><i class="grip"></i></div>
          <div class="row-presets">
            <div class="dd dd-presets"><span>Render Presets</span><i class="updown"></i></div>
            <span class="sq">+</span><span class="sq">–</span>
          </div>

          <div class="cols">
            <div>
              <div class="lbl lbl9">Resolution:</div>
              <div class="fstack">
                <div class="num"><i class="al"></i><span>X:</span><b>1920 px</b><i class="ar"></i></div>
                <div class="num"><i class="al"></i><span>Y:</span><b>1080 px</b><i class="ar"></i></div>
                <div class="num slider s50"><b>50%</b></div>
              </div>
              <div class="lbl lbl5">Aspect Ratio:</div>
              <div class="fstack">
                <div class="num"><i class="al"></i><span>X:</span><b>1.000</b><i class="ar"></i></div>
                <div class="num"><i class="al"></i><span>Y:</span><b>1.000</b><i class="ar"></i></div>
              </div>
              <div class="chks">
                <span class="chkl"><i class="chk"></i><em>Bord</em></span>
                <span class="chkl off"><i class="chk"></i><em>Crop</em></span>
              </div>
            </div>
            <div>
              <div class="lbl lbl9 ind">rame Range:</div>
              <div class="fstack">
                <div class="num"><i class="al"></i><span>{{ 'Start   rame:' }}</span><b>1</b><i class="ar"></i></div>
                <div class="num"><i class="al"></i><span>{{ 'End   rame:' }}</span><b>250</b><i class="ar"></i></div>
                <div class="num"><i class="al"></i><span class="ind6">rame Step:</span><b>1</b><i class="ar"></i></div>
              </div>
              <div class="lbl lbl5 ind">rame Rate:</div>
              <div class="dd dd-fps"><span>24 fps</span><i class="updown"></i></div>
              <div class="lbl lbl4 ind2">Time Remapping:</div>
              <div class="remap">
                <div class="num"><i class="al"></i><span>:100</span><i class="ar"></i></div>
                <div class="num"><i class="al"></i><span>: 100</span><i class="ar"></i></div>
              </div>
            </div>
          </div>

          <div class="ph gap10"><i class="tri-down"></i><i class="chk on small-left"><svg class="tick" viewBox="0 0 12 12"><path d="M2 6l3 3 5-8" fill="none" stroke="#eee" stroke-width="1.800"/></svg></i><span>Anti-Aliasing</span><i class="grip"></i></div>
          <div class="cols aa">
            <div class="seg"><span>5</span><span class="blue">8</span><span>11</span><span>16</span></div>
            <div class="dd dd-mitch"><span>Mitchell-Netravali</span><i class="updown"></i></div>
            <span class="chkl"><i class="chk"></i><em class="ind-em">ull Sample</em></span>
            <div class="num round"><i class="al"></i><span>Size:</span><b>1.000 px</b><i class="ar"></i></div>
          </div>

          <div v-for="(p, i) in collapsedA" :key="p.name" class="ph" :class="{ gap7: i === 0 }">
            <i class="tri-right"></i><i v-if="p.chk" class="chk small-left"></i><span>{{ p.name }}</span><i class="grip"></i>
          </div>

          <div class="ph gap1"><i class="tri-down"></i><span>Output</span><i class="grip"></i></div>
          <div class="row-path">
            <div class="path">/tmp\</div>
            <span class="pathbtn"><svg class="ic ic14"><use href="#i-folder"/></svg></span>
          </div>
          <div class="cols out-a">
            <span class="chkl"><i class="chk on"><svg class="tick" viewBox="0 0 12 12"><path d="M2 6l3 3 5-8" fill="none" stroke="#eee" stroke-width="1.800"/></svg></i><em class="white">Overwrite</em></span>
            <span class="chkl"><i class="chk on"><svg class="tick" viewBox="0 0 12 12"><path d="M2 6l3 3 5-8" fill="none" stroke="#eee" stroke-width="1.800"/></svg></i><em class="white ind-em">ile Extensions</em></span>
          </div>
          <div class="cols out-b">
            <span class="chkl"><i class="chk"></i><em>Placeholders</em></span>
            <span class="chkl"><i class="chk"></i><em>Cache Result</em></span>
          </div>
          <div class="cols out-c">
            <div class="dd dd-png"><svg class="ic ic14"><use href="#i-png"/></svg><span>PNG</span><i class="updown"></i></div>
            <div class="seg seg-rgb"><span>BW</span><span>RGB</span><span class="blue">RGBA</span></div>
          </div>
          <div class="row-depth">
            <span class="rl">Color Depth:</span>
            <div class="seg seg-depth"><span class="blue">8</span><span>16</span></div>
          </div>
          <div class="num slider s15 compress"><span>Compression:</span><b>15%</b></div>

          <div class="ph gap10"><i class="tri-right"></i><span>Bake</span><i class="grip"></i></div>
          <div class="ph"><i class="tri-right"></i><i class="chk small-left"></i><span class="free">reestyle</span><i class="grip"></i></div>
        </div>
        <div class="corner corner-sb"></div>
      </aside>
    </div>

    <footer class="taskbar">
      <svg class="start"><use href="#t-start"/></svg>
      <div class="pinned">
        <span v-for="(t, i) in taskIcons" :key="i" class="task" :class="{ open: t.open, hot: t.hot }">
          <svg class="tic" viewBox="0 0 40 40">
            <use :href="'#' + t.id" width="40" height="40"/>
            <text v-for="l in t.labels" :key="l.t" :x="l.x" :y="l.y" :font-size="l.size" :font-family="l.font" :fill="l.fill" font-weight="700" text-anchor="middle">{{ l.t }}</text>
          </svg>
        </span>
      </div>
      <div class="tray">
        <span class="lang">RU</span>
        <i class="tray-up"></i>
        <svg class="tray-ic" viewBox="0 0 16 16"><path d="M1 3l6-1v5.500H1zM8 1.800L15 1v6.500H8zM1 8.500h6V14l-6-1zM8 8.500h7V15l-7-1z" fill="#fff"/></svg>
        <svg class="tray-ic" viewBox="0 0 16 16"><path d="M2 6h3l4-4v12l-4-4H2z" fill="#eef"/><path d="M11 5c1.500 2 1.500 4 0 6M13 3.500c2.500 3 2.500 6 0 9" fill="none" stroke="#eef" stroke-width="1.200"/></svg>
        <svg class="tray-ic" viewBox="0 0 16 16"><path d="M3 3h6v10H3zM11 1h3v3h-3z" fill="none" stroke="#f4f8fb" stroke-width="1.300"/><path d="M9 8h3.500V4M2 14.500h8" fill="none" stroke="#f4f8fb" stroke-width="1.300"/></svg>
        <div class="clock"><span>14:46</span><span>16.01.2016</span></div>
        <div class="showdesk"></div>
      </div>
    </footer>

    <!-- floating popup, tooltip and marker sit above everything -->
    <div class="menu">
      <div class="menu-title">Specials</div>
      <template v-for="(g, gi) in menuGroups" :key="gi">
        <div class="msep" :class="{ 'msep-first': gi === 0 }"></div>
        <div v-for="it in g" :key="it[0]" class="mitem" :class="{ hot: it[0] === '&Bevel' }">
          <span class="mlabel">{{ split(it[0])[0] }}<u>{{ split(it[0])[1] }}</u>{{ split(it[0])[2] }}</span>
          <span v-if="it[1]" class="mkey">{{ it[1] }}</span>
        </div>
      </template>
    </div>
    <div class="tooltip">
      <div class="tt-main">Создать скос на ребре</div>
      <div class="tt-py">ython: bpy.ops.mesh.bevel()</div>
    </div>
    <div class="marker"></div>
  </div>
</template>

<style>
html, body { margin: 0; background: #333; }
</style>

<style scoped>
.app {
  position: relative;
  width: 1920px;
  height: 1080px;
  overflow: hidden;
  display: flex;
  flex-direction: column;
  font-family: "DejaVu Sans", sans-serif;
  font-size: 10.2px;
  color: #111;
  background: #727272;
}
.defs { position: absolute; }
.ic { width: 16px; height: 16px; flex: none; display: block; }
.ic14 { width: 14px; height: 14px; }
i, em { font-style: normal; }

/* window chrome */
.titlebar {
  height: 21px;
  box-sizing: border-box;
  flex: none;
  display: flex;
  align-items: center;
  background: linear-gradient(90deg, #a8d9ef, #77c0e4 16%, #8bcdec 38%, #66bde6 50%, #6fc4ea 62%, #8ccbe9 82%, #a9d8ee);
  border-bottom: 1px solid #d6eef9;
}
.title-logo { width: 16px; height: 16px; }
.title-text { margin-left: 0; font-family: "Noto Sans", sans-serif; font-size: 12px; color: #000; }
.winbtns { margin-left: auto; margin-right: 3px; align-self: flex-start; display: flex; height: 17px; border: 1px solid #5a8fb0; border-top: 0; border-radius: 0 0 4px 4px; overflow: hidden; }
.wb { width: 27px; background: linear-gradient(#d8eaf4, #9cc4dc); display: flex; align-items: center; justify-content: center; border-right: 1px solid #6a9ab8; }
.wb.close { width: 47px; border: 0; background: linear-gradient(#e0a29a, #c0392b 55%, #b8362a); color: #fff; font: 700 12px "Liberation Sans", sans-serif; }
.wb-min { width: 9px; height: 3px; background: #fff; border: 1px solid #456; margin-top: 4px; }
.wb-max { width: 7px; height: 8px; border: 1px solid #345; background: #dde; box-shadow: 2px -2px 0 -1px #dde, 2px -2px 0 0 #345; }

/* top header */
.topbar {
  position: relative;
  height: 27px;
  padding-top: 3px;
  box-sizing: border-box;
  flex: none;
  display: flex;
  align-items: center;
  background: linear-gradient(#757575, #696969);
  border-bottom: 1px solid #111;
}
.pill {
  height: 20px;
  display: flex;
  align-items: center;
  gap: 1px;
  padding: 0 3px 0 5px;
  box-sizing: border-box;
  border-radius: 5px;
  background: linear-gradient(#4e4e4e, #383838);
  border: 1px solid #2c2c2c;
}
.pill-top { margin-left: 8px; width: 29px; }
.updown {
  display: inline-block;
  flex: none;
  width: 7px;
  height: 12px;
  position: relative;
  margin-left: auto;
}
.updown::before, .updown::after {
  content: "";
  position: absolute;
  left: 0;
  border-left: 3.5px solid transparent;
  border-right: 3.5px solid transparent;
}
.updown::before { top: 0; border-bottom: 5px solid #c8c8c8; }
.updown::after { bottom: 0; border-top: 5px solid #c8c8c8; }
.menubar span { position: absolute; top: 9px; }
.m-ile { left: 56px; }
.m-render { left: 88px; }
.m-win { left: 144px; }
.m-help { left: 203px; }
.pill-layout { margin-left: 203px; border-radius: 5px 0 0 5px; width: 32px; }
.pill-scene { margin-left: 7px; border-radius: 5px 0 0 5px; width: 32px; }
.namefield { height: 20px; box-sizing: border-box; background: linear-gradient(#9a9a9a, #b4b4b4); border: 1px solid #3d3d3d; border-width: 1px 0; display: flex; align-items: center; padding-left: 6px; }
.nf-layout { width: 118px; }
.nf-scene { width: 119px; }
.nf-btn { width: 20px; height: 20px; box-sizing: border-box; background: linear-gradient(#b0b0b0, #858585); border: 1px solid #3d3d3d; border-right: 0; display: flex; align-items: center; justify-content: center; font: 700 18px/1 "DejaVu Sans", sans-serif; color: #fff; text-shadow: 0 0 1px #000; }
.nf-btn.end { border-right: 1px solid #3d3d3d; border-radius: 0 5px 5px 0; }
.dd {
  height: 20px;
  box-sizing: border-box;
  display: flex;
  align-items: center;
  gap: 4px;
  padding: 0 4px 0 8px;
  color: #eee;
  border-radius: 5px;
  border: 1px solid #2c2c2c;
  background: linear-gradient(#4e4e4e, #373737);
}
.dd-engine { width: 111px; margin-left: 17px; }
.ic-logo { margin-left: 17px; }
.stats { margin-left: 11px; white-space: pre; font-size: 10.1px; color: #1a1a1a; }
.corner {
  position: absolute;
  width: 14px;
  height: 14px;
  background: repeating-linear-gradient(45deg, transparent 0 2px, rgba(255, 255, 255, .55) 2px 3px);
  clip-path: polygon(100% 0, 100% 100%, 0 0);
}
.corner-tr { right: 0; top: 0; }
.corner-tl { left: 0; bottom: 0; transform: rotate(180deg); width: 9px; height: 9px; }
.corner-view { right: 0; top: 0; }
.corner-bl { left: 0; bottom: 0; transform: rotate(180deg); width: 11px; height: 11px; }
.corner-ph { right: 0; top: 0; }
.corner-sb { left: 0; bottom: 0; transform: rotate(180deg); }

/* layout */
.workspace { flex: 1; display: flex; min-height: 0; }
.left { width: 1665px; flex: none; display: flex; flex-direction: column; }
.main3d { flex: 1; display: flex; min-height: 0; }

.shelf { width: 160px; flex: none; display: flex; flex-direction: column; background: #727272; border-right: 1px solid #555; box-sizing: border-box; }
.shelf-top { height: 723px; flex: none; display: flex; border-bottom: 1px solid #626262; box-sizing: border-box; }
.tabs { width: 20px; flex: none; background: #5f5f5f; position: relative; border-right: 1px solid #666; box-sizing: border-box; }
.tab {
  position: absolute;
  left: 2px;
  width: 17px;
  border-radius: 5px 0 0 5px;
  background: #696969;
  border: 1px solid #555;
  border-right: 0;
  box-sizing: border-box;
  display: flex;
  align-items: center;
  justify-content: center;
  color: #222;
}
.tab.on { background: #747474; width: 18px; }
.tab span { writing-mode: vertical-rl; transform: rotate(180deg); white-space: nowrap; font-size: 10px; }
.tab-tools { top: 7px; height: 38px; }
.tab-create { top: 49px; height: 43px; }
.tab-shading { top: 97px; height: 80px; }
.tab-options { top: 181px; height: 51px; }
.tab-grease { top: 235px; height: 79px; }
.tab-misc { top: 319px; height: 35px; }
.tab-relations { top: 358px; height: 58px; }

.shelf-panel { flex: 1; padding: 5px 9px 0 9px; }
.shelf-head { display: flex; align-items: center; height: 14px; gap: 3px; padding-left: 4px; font-size: 11px; }
.shelf-head span { flex: 1; }
.tri-down { flex: none; width: 0; height: 0; border-left: 4px solid transparent; border-right: 4px solid transparent; border-top: 7px solid #222; }
.tri-right { flex: none; width: 0; height: 0; border-top: 4px solid transparent; border-bottom: 4px solid transparent; border-left: 7px solid #333; margin-left: 1px; }
.grip {
  flex: none;
  width: 11px;
  height: 5px;
  background-image: radial-gradient(circle at 1px 1px, #444 .7px, transparent .8px);
  background-size: 3px 2.5px;
}
.shelf-lbl { padding-left: 7px; height: 14px; line-height: 14px; }
.lbl-prim { margin-top: 18px; margin-bottom: 2px; }
.lbl-spec { margin-top: 3px; margin-bottom: 2px; }
.stack { border: 1px solid #3d3d3d; border-radius: 6px; overflow: hidden; }
.sbtn {
  height: 20px;
  display: flex;
  align-items: center;
  box-sizing: border-box;
  padding-left: 3px;
  background: linear-gradient(#a8a8a8, #8a8a8a);
  border-top: 1px solid #4d4d4d;
  color: #111;
}
.sbtn:first-child { border-top: 0; height: 19px; }
.sbtn span { flex: 1; text-align: center; padding-right: 4px; }

.op-panel { flex: 1; padding: 5px 9px 0 7px; }
.op-panel .shelf-head { padding-left: 6px; }
.op-lbl { margin: 16px 0 4px 7px; height: 14px; line-height: 14px; }
.dd-toggle { height: 19px; }
.dd .updown { margin-left: auto; }

.canvas { position: relative; flex: 1; background: #393939; overflow: hidden; }
.scene { position: absolute; left: 0; top: 0; }
.note { font: 700 26px "Liberation Sans", sans-serif; fill: #e2202a; }
.axl { font: 10px "DejaVu Sans", sans-serif; }
.objname { font: 10.2px "DejaVu Sans", sans-serif; fill: #f2f2f2; }
.persp { font: 10.2px "DejaVu Sans", sans-serif; fill: #ddd; }
.plus-tab { position: absolute; right: 0; top: 23px; width: 15px; height: 14px; background: #2f2f2f; border-radius: 4px 0 0 4px; color: #aaa; font: 700 13px/14px "DejaVu Sans", sans-serif; text-align: center; }

/* 3D view header */
.viewhead, .lowerhead { position: relative; flex: none; display: flex; align-items: center; background: linear-gradient(#757575, #696969); }
.viewhead { height: 27px; box-sizing: border-box; border-top: 1px solid #555; border-bottom: 1px solid #111; }
.lowerhead { height: 26px; }
.p-mode { margin-left: 9px; width: 30px; }
.vh-menu { display: flex; width: 186px; }
.vh-menu span:nth-child(1) { margin-left: 14px; }
.vh-menu span:nth-child(2) { margin-left: 21px; }
.vh-menu span:nth-child(3) { margin-left: 18px; }
.vh-menu span:nth-child(4) { margin-left: 18px; }
.dd-mode { width: 99px; padding-left: 3px; }
.dd-shade { width: 36px; margin-left: 5px; padding-left: 3px; }
.dd-pivot { width: 36px; margin-left: 4px; padding-left: 3px; }
.tool-group { display: flex; height: 20px; box-sizing: border-box; border: 1px solid #2c2c2c; border-radius: 5px; overflow: hidden; background: linear-gradient(#4e4e4e, #373737); margin-left: 5px; }
.tg { display: flex; align-items: center; justify-content: center; width: 20px; box-sizing: border-box; border-right: 1px solid #2c2c2c; }
.tg:last-child { border-right: 0; }
.tg .ic { width: 14px; height: 14px; }
.tg.act { background: linear-gradient(#7da3dc, #5580c0); }
.tg-global { width: 70px; display: flex; align-items: center; padding: 0 4px 0 8px; box-sizing: border-box; color: #eee; }
.tg-global .updown { margin-left: auto; }
.tool-group.light { background: linear-gradient(#9a9a9a, #7c7c7c); }
.tg.act2 { background: linear-gradient(#4e4e4e, #373737); }
.tg-sel { width: 60px; }
.tg-orb .tg { width: 18px; border: 0; }
.dd-prop { width: 35px; margin-left: 5px; padding-left: 3px; }
.tg-snap .tg:first-child { background: linear-gradient(#9a9a9a, #7c7c7c); }
.tg-snap .tg:last-child { width: 33px; gap: 3px; }
.tg-rimg .tg { width: 18px; border: 0; }
.tg-rnd .tg { width: 18px; }

.ptabs { display: flex; margin-left: 9px; border-radius: 4px; overflow: hidden; border: 1px solid #2c2c2c; height: 20px; box-sizing: border-box; background: linear-gradient(#4e4e4e, #373737); }
.ptab { width: 20px; flex: none; display: flex; align-items: center; justify-content: center; border-right: 1px solid #2c2c2c; box-sizing: border-box; }
.ptab.blue { background: linear-gradient(#8ab0e8, #4e78bc); }
.ptab .ic { width: 16px; height: 16px; }
.ptabs-low .ptab:not(.blue) .ic { opacity: .8; }

/* right column */
.side { position: relative; flex: 1; border-left: 1px solid #000; background: #727272; min-width: 0; overflow: hidden; }
.outl-head { height: 28px; position: relative; display: flex; align-items: center; background: linear-gradient(#757575, #696969); border-bottom: 1px solid #555; box-sizing: border-box; }
.p-outl { margin-left: 9px; width: 30px; flex: none; }
.oh-view { position: absolute; left: 52px; }
.oh-search { position: absolute; left: 96px; }
.dd-all { position: absolute; left: 143px; right: -5px; }
.tree { position: relative; height: 145px; background: #6f6f6f; }
.tree-line { position: absolute; left: 27px; top: 19px; width: 1px; height: 92px; background: #2e2e2e; }
.orow { position: relative; height: 20px; display: flex; align-items: center; box-sizing: border-box; background: #707070; }
.orow.even { background: #757575; }
.orow.hi { background: linear-gradient(90deg, #8d8d8d 0 195px, #6f6f6f 195px); }
.lvl0 { padding-left: 3px; }
.lvl1 { padding-left: 28px; }
.lvl2 { padding-left: 42px; }
.lvl3 { padding-left: 24px; }
.lvl0::before, .lvl3::before { content: ""; position: absolute; top: 9px; height: 1px; background: #2e2e2e; }
.lvl0::before { left: 14px; width: 10px; }
.lvl3::before { left: 34px; width: 8px; }
.exp { flex: none; width: 11px; height: 11px; box-sizing: border-box; border-radius: 50%; background: #d8d8d8; border: 1px solid #222; position: relative; margin-right: 6px; }
.exp::before { content: ""; position: absolute; left: 1px; right: 1px; top: 4px; height: 1px; background: #111; }
.exp.plus::after { content: ""; position: absolute; top: 1px; bottom: 1px; left: 4px; width: 1px; background: #111; }
.lvl0 .exp { margin-right: 9px; }
.lvl1 .exp { margin-right: 3px; }
.lvl3 .exp { margin-right: 7px; }
.oic { border-radius: 50%; position: relative; }
.oic.sel { background: #c47a30; box-shadow: 0 0 0 2px #c47a30; }
.oic.ring { box-shadow: 0 0 0 2px rgba(210, 220, 240, .5); background: rgba(210, 220, 240, .5); }
.oname { margin-left: 4px; }
.oname.white { color: #fff; }
.obar { flex: none; width: 2px; height: 10px; background: #3d3d3d; margin: 0 6px 0 10px; }
.oex { border-radius: 50%; background: rgba(200, 200, 200, .35); box-shadow: 0 0 0 2px rgba(200, 200, 200, .35); }
.oex.plain { background: none; box-shadow: none; }
.orest { margin-left: auto; width: 59px; flex: none; display: flex; height: 100%; }
.ocell { width: 20px; display: flex; align-items: center; justify-content: center; border-left: 1px solid #626262; box-sizing: border-box; }
.hscroll { height: 14px; margin: 7px 5px 0 4px; border-radius: 7px; background: #565656; }
.hthumb { width: 206px; height: 14px; border-radius: 7px; background: linear-gradient(#9c9c9c, #7e7e7e); }

.props-head { position: relative; height: 26px; display: flex; align-items: center; background: linear-gradient(#757575, #696969); border-top: 1px solid #0e0e0e; box-sizing: content-box; }
.props { padding: 0 8px; }
.ctx { height: 36px; box-sizing: border-box; display: flex; align-items: center; gap: 4px; padding-left: 5px; border-bottom: 1px solid #4d4d4d; margin: 0 -3px; }
.ctx-sc { margin-left: 3px; }
.ctx span { margin-left: 3px; }
.ph {
  height: 24px;
  box-sizing: border-box;
  display: flex;
  align-items: center;
  gap: 5px;
  margin: 0 -3px;
  padding: 0 5px 0 9px;
  border-top: 1px solid #4d4d4d;
  font-size: 11px;
}
.ph span { flex: 1; }
.ph.first { border-top: 0; height: 22px; }
.gap7 { margin-top: 7px; }
.gap10 { margin-top: 10px; }
.gap1 { margin-top: 1px; }
.small-left.chk { width: 13px; height: 13px; }
.row-render { margin-top: 10px; }
.bgroup { display: flex; height: 19px; border: 1px solid #3d3d3d; border-radius: 5px; overflow: hidden; box-sizing: border-box; }
.bb { display: flex; align-items: center; padding-left: 2px; border-right: 1px solid #3d3d3d; box-sizing: border-box; background: linear-gradient(#8e8e8e, #a6a6a6); }
.bb .ic { width: 14px; height: 14px; }
.bb em { flex: 1; text-align: center; }
.b-r { width: 78px; }
.b-a { width: 79px; }
.b-s { flex: 1; border-right: 0; }
.row-display { margin-top: 8px; display: flex; align-items: center; height: 18px; }
.rl { padding-left: 7px; width: 77px; flex: none; }
.dd-display { height: 18px; flex: 1; border-radius: 5px 0 0 5px; }
.lockbtn { width: 19px; height: 18px; box-sizing: border-box; border: 1px solid #3d3d3d; border-left: 0; border-radius: 0 5px 5px 0; background: linear-gradient(#b0b0b0, #8e8e8e); display: flex; align-items: center; justify-content: center; }
.row-presets { margin-top: 9px; display: flex; height: 20px; }
.dd-presets { flex: 1; border-radius: 5px 0 0 5px; }
.sq { width: 20px; box-sizing: border-box; border: 1px solid #3d3d3d; border-left: 0; background: linear-gradient(#b0b0b0, #8e8e8e); color: #fff; display: flex; align-items: center; justify-content: center; font: 700 15px "DejaVu Sans", sans-serif; text-shadow: 0 0 1px #222; }
.sq:last-child { border-radius: 0 5px 5px 0; }

.cols { display: grid; grid-template-columns: 114px 115px; column-gap: 9px; }
.lbl { height: 14px; line-height: 14px; padding-left: 7px; white-space: nowrap; }
.lbl.ind { padding-left: 14px; }
.lbl.ind2 { padding-left: 8px; }
.lbl9 { margin-top: 9px; margin-bottom: 3px; }
.lbl5 { margin-top: 5px; margin-bottom: 3px; }
.lbl4 { margin-top: 4px; margin-bottom: 3px; }
.fstack { border: 1px solid #3d3d3d; border-radius: 7px; overflow: hidden; }
.num {
  height: 19px;
  box-sizing: border-box;
  display: flex;
  align-items: center;
  white-space: pre;
  padding: 0 3px;
  background: linear-gradient(#9c9c9c, #b6b6b6);
  border-top: 1px solid #454545;
}
.fstack .num:first-child { border-top: 0; height: 18px; }
.num span { margin-left: 3px; }
.num b { font-weight: 400; margin-left: auto; margin-right: 3px; }
.al, .ar { flex: none; width: 0; height: 0; border-top: 3px solid transparent; border-bottom: 3px solid transparent; }
.al { border-right: 4px solid #6e6e6e; margin-left: 3px; }
.ar { border-left: 4px solid #6e6e6e; margin-right: 3px; }
.num .ind6 { margin-left: 11px; }
.slider.s50 { background: linear-gradient(90deg, #6a6a6a 0 61px, transparent 61px), linear-gradient(#9c9c9c, #b6b6b6); }
.slider.s50 b { margin-right: 12px; }
.slider.s15 { background: linear-gradient(90deg, #6a6a6a 0 43px, transparent 43px), linear-gradient(#9c9c9c, #b6b6b6); }
.chks { display: flex; margin-top: 4px; height: 16px; }
.chkl { display: flex; align-items: center; gap: 8px; padding-left: 3px; }
.chks .chkl { width: 59px; flex: none; }
.chkl.off { color: #4e4e4e; }
.chkl.off .chk { background: #666; }
.chk { flex: none; position: relative; width: 14px; height: 14px; box-sizing: border-box; border-radius: 4px; border: 1px solid #333; background: linear-gradient(#4e4e4e, #5e5e5e); display: inline-block; }
.chk.on { background: #555; }
.tick { position: absolute; left: 0; top: -2px; width: 13px; height: 13px; }
.ind-em { padding-left: 6px; }
em.white { color: #f2f2f2; }
.dd-fps { height: 19px; }
.remap { display: flex; border: 1px solid #3d3d3d; border-radius: 9px; overflow: hidden; height: 19px; box-sizing: border-box; margin-top: 3px; }
.remap .num { flex: 1; border-top: 0; height: 17px; border-right: 1px solid #3d3d3d; padding: 0; }
.remap .num:last-child { border-right: 0; }
.remap .al { margin-right: 2px; }
.remap .ar { margin-left: auto; }

.aa { margin-top: 8px; row-gap: 3px; }
.seg { display: flex; height: 20px; border: 1px solid #2c2c2c; border-radius: 5px; overflow: hidden; box-sizing: border-box; color: #eee; background: linear-gradient(#4e4e4e, #373737); }
.seg span { flex: 1; display: flex; align-items: center; justify-content: center; border-right: 1px solid #222; }
.seg span:last-child { border-right: 0; }
.seg .blue { background: linear-gradient(#5f88cc, #4c78c0); color: #102040; }
.dd-mitch { height: 19px; padding-left: 7px; }
.dd-mitch span { white-space: nowrap; }
.num.round { border: 1px solid #3d3d3d; border-radius: 9px; height: 19px; }

.row-path { display: flex; height: 20px; margin-top: 8px; }
.path { flex: 1; box-sizing: border-box; border: 1px solid #3d3d3d; border-radius: 6px 0 0 6px; background: linear-gradient(#9c9c9c, #b4b4b4); display: flex; align-items: center; padding-left: 6px; }
.pathbtn { width: 20px; box-sizing: border-box; border: 1px solid #3d3d3d; border-left: 0; border-radius: 0 6px 6px 0; background: linear-gradient(#9c9c9c, #808080); display: flex; align-items: center; justify-content: center; }
.out-a { margin-top: 6px; height: 20px; align-items: center; }
.out-b { margin-top: 2px; height: 20px; align-items: center; }
.out-c { margin-top: 4px; }
.dd-png { padding-left: 6px; }
.seg-rgb span:nth-child(1) { flex: 37; }
.seg-rgb span:nth-child(2) { flex: 38; }
.seg-rgb span:nth-child(3) { flex: 40; }
.row-depth { display: flex; align-items: center; height: 19px; margin-top: 2px; }
.row-depth .rl { width: 77px; }
.seg-depth { flex: 1; height: 19px; border-radius: 5px; }
.compress { height: 19px; margin-top: 3px; border: 1px solid #3d3d3d; border-radius: 9px; }
.compress span { margin-left: 10px; }
.compress b { margin-right: 10px; }
.free { padding-left: 6px; }

/* taskbar */
.taskbar {
  position: relative;
  height: 40px;
  flex: none;
  display: flex;
  align-items: center;
  background: linear-gradient(#80c4e6 0, #6eb6dc 50%, #5fa9d2);
  border-top: 1px solid #c4e6f6;
  box-sizing: border-box;
}
.start { width: 38px; height: 38px; margin-left: 8px; flex: none; }
.pinned { display: flex; margin-left: 12px; height: 100%; }
.task { width: 62px; flex: none; display: flex; align-items: center; justify-content: center; box-sizing: border-box; }
.task.open { border: 1px solid #d8eef8; border-radius: 3px; background: linear-gradient(rgba(255, 255, 255, .28), rgba(255, 255, 255, .08)); width: 61px; }
.task.open + .task.open { margin-left: 1px; }
.task.open.hot { background: linear-gradient(#f4e6d8, #f2b888); }
.tic { width: 38px; height: 38px; }
.tray { margin-left: auto; display: flex; align-items: center; height: 100%; font-family: "Open Sans", sans-serif; font-size: 11px; color: #fff; }
.lang { margin-right: 25px; font-size: 11px; }
.tray-up { width: 0; height: 0; border-left: 4px solid transparent; border-right: 4px solid transparent; border-bottom: 5px solid #fff; margin-right: 11px; }
.tray-ic { width: 16px; height: 16px; margin-right: 8px; }
.clock { display: flex; flex-direction: column; align-items: center; width: 62px; line-height: 16px; color: #fff; margin-left: 3px; margin-right: 9px; font-size: 10.5px; }
.showdesk { width: 24px; height: 100%; border-left: 1px solid #c4e6f6; background: linear-gradient(rgba(255, 255, 255, .3), rgba(255, 255, 255, .05)); }

/* popup menu */
.menu {
  position: absolute;
  left: 168px;
  top: 33px;
  width: 150px;
  height: 511px;
  box-sizing: border-box;
  background: rgba(28, 28, 28, .93);
  border-radius: 5px;
  box-shadow: 0 2px 6px rgba(0, 0, 0, .4);
  color: #f0f0f0;
  font-size: 10px;
  z-index: 5;
}
.menu-title { height: 29px; line-height: 30px; padding-left: 9px; color: #bbb; }
.msep { height: 1px; background: #3a3a3a; margin: 4px 0; }
.msep-first { margin-top: 0; }
.mitem {
  position: relative;
  height: 20px;
  display: flex;
  align-items: center;
  padding: 0 8px 0 31px;
  white-space: pre;
}
.mitem.hot { background: linear-gradient(#6f9adb, #4d78bc 85%, #3f65a8); height: 19px; margin-bottom: 1px; color: #101a2a; }
.mkey { margin-left: auto; }
.tooltip {
  position: absolute;
  left: 260px;
  top: 346px;
  width: 195px;
  height: 54px;
  box-sizing: border-box;
  padding: 13px 0 0 12px;
  background: rgba(28, 28, 28, .86);
  border-radius: 5px;
  box-shadow: 0 2px 5px rgba(0, 0, 0, .3);
  z-index: 6;
}
.tt-main { color: #f0f0f0; font-size: 9.9px; }
.tt-py { margin: 9px 0 0 5px; color: #8c8c8c; font: 10px "Liberation Mono", "DejaVu Sans Mono", monospace; }
.marker { position: absolute; left: 168px; top: 314px; width: 154px; height: 37px; box-sizing: border-box; border: 5px solid #ffff00; z-index: 7; }
</style>
